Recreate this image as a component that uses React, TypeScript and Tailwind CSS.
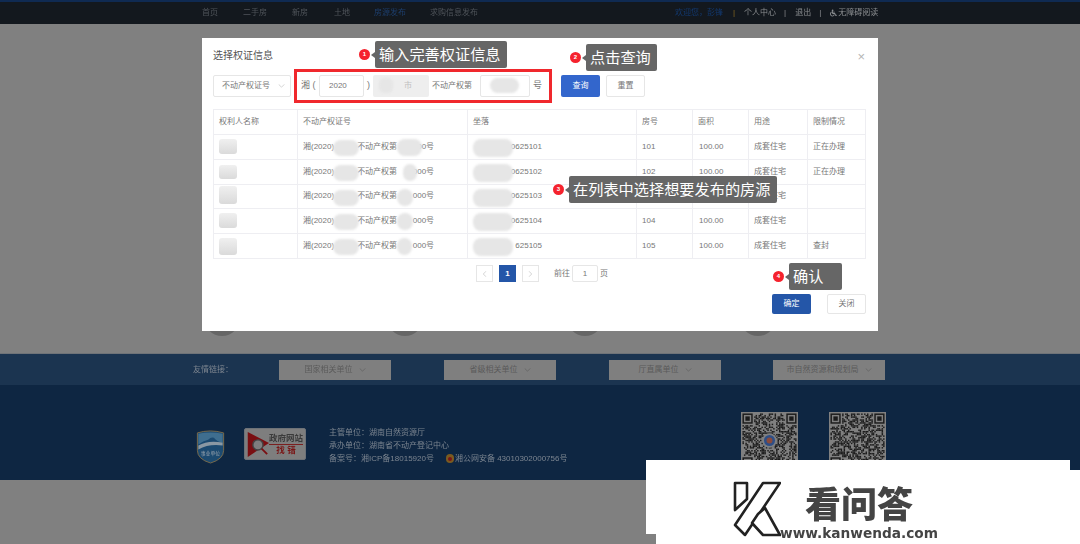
import { FaWheelchair } from "react-icons/fa";

const cjk = { fontFamily: '"Liberation Sans","Noto Sans CJK SC",sans-serif' };

const cols = ["w-[84px]", "w-[170px]", "w-[169px]", "w-[56px]", "w-[56px]", "w-[59px]", "w-[58px]"];
const head = ["权利人名称", "不动产权证号", "坐落", "房号", "面积", "用途", "限制情况"];
const rows = [
  { end: "00号", addr: "0625101", room: "101", limit: "正在办理", name: "top-[4px] h-[15px]", blob: "left-[99px] w-[25px]" },
  { end: "000号", addr: "0625102", room: "102", limit: "正在办理", name: "top-[5px] h-[14px]", blob: "left-[105px] w-[14px]" },
  { end: "000号", addr: "0625103", room: "103", limit: "", name: "top-[1px] h-[18px]", blob: "left-[99px] w-[16px]" },
  { end: "000号", addr: "0625104", room: "104", limit: "", name: "top-[4px] h-[15px]", blob: "left-[99px] w-[16px]" },
  { end: "000号", addr: "625105", room: "105", limit: "查封", name: "top-[4px] h-[17px]", blob: "left-[99px] w-[15px]" },
];

function Blob({ className }: { className: string }) {
  return <span className={"absolute rounded-[5px] bg-[#e6e6e6] blur-[1px] " + className} />;
}

function Callout({ n, text, className, width }: { n: number; text: string; className: string; width: string }) {
  return (
    <div className={"absolute flex items-center " + className}>
      <span className="flex h-[11px] w-[11px] items-center justify-center rounded-full bg-[#f5222d] text-[6px] font-bold text-white">{n}</span>
      <span className="ml-[1px] h-0 w-0 border-y-[3px] border-r-[4px] border-y-transparent border-r-[#666666]" />
      <span className={"flex h-[27px] items-center rounded-[2px] bg-[#666666] pl-[4px] text-[15.2px] leading-none text-white " + width}>{text}</span>
    </div>
  );
}

function Chevron({ className }: { className: string }) {
  return (
    <svg viewBox="0 0 8 5" className={"h-[4px] w-[7px] " + className} fill="none" stroke="currentColor" strokeWidth="0.8">
      <path d="M0.5 0.5 4 4 7.5 0.5" />
    </svg>
  );
}

function Qr({ seed, logo }: { seed: number; logo?: boolean }) {
  const n = 37;
  const cells: React.ReactNode[] = [];
  let s = seed;
  for (let y = 0; y < n; y++) {
    for (let x = 0; x < n; x++) {
      s = (s * 1103515245 + 12345) & 0x7fffffff;
      const inFinder = (x < 8 && y < 8) || (x > n - 9 && y < 8) || (x < 8 && y > n - 9);
      if (!inFinder && (s >> 16) % 2 === 0) cells.push(<rect key={x + "-" + y} x={x} y={y} width="1" height="1" />);
    }
  }
  const finder = (x: number, y: number) => (
    <g key={x + "," + y}>
      <rect x={x + 0.5} y={y + 0.5} width="6" height="6" fill="none" stroke="#1c1c1c" />
      <rect x={x + 2} y={y + 2} width="3" height="3" />
    </g>
  );
  return (
    <svg viewBox="-1 -1 39 39" className="h-[57px] w-[57px] bg-[#808080]" fill="#1c1c1c">
      {cells}
      {finder(0, 0)}
      {finder(n - 7, 0)}
      {finder(0, n - 7)}
      {logo && (
        <g>
          <circle cx="18.5" cy="18.5" r="5" fill="#808080" />
          <circle cx="18.5" cy="18.5" r="3.8" fill="#2f4f86" />
          <circle cx="18.5" cy="18.5" r="2" fill="#8a4a3c" />
        </g>
      )}
    </svg>
  );
}

function Watermark() {
  return (
    <>
      <div className="absolute left-[646px] top-[460px] h-[74px] w-[424px] bg-white" />
      <div className="absolute left-[656px] top-[470px] h-[74px] w-[424px] bg-white" />
      <svg viewBox="0 0 50 60" className="absolute left-[731px] top-[481px] h-[60px] w-[50px] blur-[0.5px]" fill="#fff" stroke="#222" strokeWidth="2.6" strokeLinejoin="round">
        <path d="M4 2H16V18L4 29z" />
        <path d="M32 2H49L14 54 4 44z" />
        <path d="M27 33 34 27 49 54H32L21 42z" />
      </svg>
      <div className="absolute left-[805px] top-[481px] text-[36px] font-black leading-[42px] text-[#444444] blur-[0.4px]" style={{ fontFamily: '"Noto Sans CJK SC",sans-serif' }}>
        看问答
      </div>
      <div className="absolute left-[780px] top-[524px] text-[13.7px] font-bold leading-[18px] text-[#444444] blur-[0.3px]" style={{ fontFamily: '"DejaVu Sans",sans-serif' }}>
        www.kanwenda.com
      </div>
    </>
  );
}

export default function App() {
  return (
    <div className="relative h-[544px] w-[1080px] overflow-hidden bg-[#808080]" style={cjk}>
      <div className="blur-[0.5px]">
        {/* top nav */}
        <nav className="flex h-[24px] items-center border-t-2 border-[#0f2a52] bg-[#13181e] pl-[202px] text-[8px] text-[#4f545a]">
          <span>首页</span>
          <span className="ml-[25px]">二手房</span>
          <span className="ml-[25px]">新房</span>
          <span className="ml-[26px]">土地</span>
          <span className="ml-[24px] text-[#1d3f6e]">房源发布</span>
          <span className="ml-[24px]">求购信息发布</span>
          <span className="ml-[197px] text-[#12386e]">欢迎您，彭锋</span>
          <span className="ml-[10px] text-[#8a6a20]">|</span>
          <span className="ml-[9px] text-[#8a8d90]">个人中心</span>
          <span className="ml-[8px] text-[#8a8d90]">|</span>
          <span className="ml-[9px] text-[#8a8d90]">退出</span>
          <span className="ml-[8px] text-[#8a8d90]">|</span>
          <FaWheelchair className="ml-[9px] h-[8px] w-[7px] text-[#8a8d90]" />
          <span className="ml-[1px] text-[#8a8d90]">无障碍阅读</span>
        </nav>

        {/* dimmed content behind the dialog */}
        <div className="flex h-[329px] items-end pb-[17px] pl-[204px]">
          <span className="h-[36px] w-[36px] rounded-full bg-[#666666]" />
          <span className="ml-[147px] h-[36px] w-[36px] rounded-full bg-[#666666]" />
          <span className="ml-[144px] h-[36px] w-[36px] rounded-full bg-[#666666]" />
          <span className="ml-[137px] h-[36px] w-[36px] rounded-full bg-[#666666]" />
        </div>

        {/* links */}
        <div className="flex h-[32px] items-center border-t border-[#6f7378] bg-[#1b3450] pl-[193px] text-[8px]">
          <span className="w-[86px] text-[#7d858f]">友情链接：</span>
          {["国家相关单位", "省级相关单位", "厅直属单位", "市自然资源和规划局"].map((t, i) => (
            <span key={t} className={"flex h-[20px] w-[112px] items-center justify-center gap-[6px] bg-[#7f7f7f] text-[#5a5a5a] " + (i === 0 ? "" : i === 3 ? "ml-[52px]" : "ml-[53px]")}>
              {t}
              <Chevron className="text-[#5f5f5f]" />
            </span>
          ))}
        </div>

        {/* footer */}
        <footer className="flex h-[95px] items-start bg-[#0e2642] pl-[196px] text-[8px] text-[#7c8590]">
          <svg viewBox="0 0 29 36" className="mt-[44px] h-[35px] w-[29px]">
            <path d="M1 4Q14 0 28 4v18q0 9-13.5 13Q1 31 1 22z" fill="#1c4a70" stroke="#7a6a4a" />
            <path d="M2 5Q14 2 27 5v9q-6-1-9-5-3-1-6 2-5 1-10 5z" fill="#3f6e8f" />
            <path d="M2 17q10-6 25-3v3q-14-2-25 4z" fill="#8a98a3" />
            <text x="14.5" y="27" fontSize="5" fill="#9aa4ae" textAnchor="middle">事业单位</text>
          </svg>
          <div className="ml-[19px] mt-[43px] flex h-[32px] w-[62px] items-center rounded-[2px] border border-[#6d7278] bg-[#7e7e7e]">
            <svg viewBox="0 0 26 30" className="h-[30px] w-[24px] shrink-0">
              <path d="M3 2 26 14 3 29z" fill="#7a0f12" />
              <circle cx="14" cy="16" r="5.5" fill="#7e7e7e" stroke="#444" strokeWidth="1.5" />
              <path d="M18 20l6 6" stroke="#7a0f12" strokeWidth="2" />
            </svg>
            <div className="flex flex-col items-center text-[8.5px] font-bold leading-[11px] text-[#3a3a3a]">
              <span className="whitespace-nowrap border-b border-[#7a2020]">政府网站</span>
              <span className="text-[#7a1515]">找 错</span>
            </div>
          </div>
          <div className="ml-[23px] mt-[41px] leading-[13px]">
            <div>主管单位：湖南自然资源厅</div>
            <div>承办单位：湖南省不动产登记中心</div>
            <div className="flex items-center">
              备案号：湘ICP备18015920号
              <span className="ml-[12px] mr-[1px] flex h-[9px] w-[8px] items-center justify-center rounded-full bg-[#7a5a20]">
                <span className="h-[4px] w-[4px] rounded-full bg-[#7a1515]" />
              </span>
              湘公网安备 43010302000756号
            </div>
          </div>
          <div className="absolute left-[741px] top-[412px] flex gap-[31px]">
            <Qr seed={7} logo />
            <Qr seed={23} />
          </div>
        </footer>

        {/* dialog */}
        <div className="absolute left-[202px] top-[38px] h-[293px] w-[676px] bg-white pl-[11px] pr-[12px] pt-[13px] text-[8px] text-[#777777]">
          <div className="flex h-[10px] items-center justify-between">
            <h2 className="text-[10px] font-normal leading-[10px] text-[#555555]">选择权证信息</h2>
            <span className="mr-[1px] text-[13px] leading-none text-[#b5b5b5]">×</span>
          </div>

          <div className="mt-[14px] flex h-[22px] items-center">
            <div className="flex h-[22px] w-[78px] items-center justify-between rounded-[2px] border border-[#e6e6e6] pl-[8px] pr-[5px]">
              不动产权证号
              <Chevron className="text-[#bdbdbd]" />
            </div>
            <span className="ml-[10px] w-[18px] text-[9px]">湘 (</span>
            <span className="flex h-[22px] w-[45px] items-center rounded-[2px] border border-[#e6e6e6] pl-[9px]">2020</span>
            <span className="ml-[3px] w-[6px] text-[9px]">)</span>
            <span className="relative flex h-[22px] w-[56px] items-center justify-center rounded-[2px] bg-[#eeeeee] pl-[14px] text-[#c0c0c0]">
              市
              <Blob className="left-[6px] top-[3px] h-[15px] w-[14px] bg-[#e2e2e2]" />
            </span>
            <span className="ml-[3px] w-[48px]">不动产权第</span>
            <span className="relative h-[22px] w-[50px] rounded-[2px] border border-[#e6e6e6]">
              <Blob className="left-[9px] top-[2px] h-[15px] w-[29px] rounded-[8px]" />
            </span>
            <span className="ml-[3px] w-[28px] text-[9px]">号</span>
            <button className="flex h-[22px] w-[39px] items-center justify-center rounded-[2px] bg-[#3366cc] text-white">查询</button>
            <button className="ml-[6px] flex h-[22px] w-[39px] items-center justify-center rounded-[2px] border border-[#e6e6e6]">重置</button>
          </div>

          <table className="mt-[12px] w-[652px] table-fixed border-collapse border border-[#eeeef2] leading-none">
            <colgroup>
              {cols.map((c, i) => (
                <col key={i} className={c} />
              ))}
            </colgroup>
            <thead>
              <tr className="h-[25px]">
                {head.map((h) => (
                  <th key={h} className="border border-[#eeeef2] pl-[5px] text-left font-normal">{h}</th>
                ))}
              </tr>
            </thead>
            <tbody>
              {rows.map((r) => (
                <tr key={r.room} className="h-[24.8px]">
                  <td className="relative border border-[#eeeef2]">
                    <span className={"absolute left-[5px] w-[18px] rounded-[3px] bg-gradient-to-b from-[#f0f0f0] to-[#dadada] blur-[0.5px] " + r.name} />
                  </td>
                  <td className="relative border border-[#eeeef2] pl-[5px]">
                    <span>湘(2020)</span>
                    <span className="ml-[23px]">不动产权第</span>
                    <span className="ml-[15px] inline-block w-[22px] text-right">{r.end}</span>
                    <Blob className="left-[35px] top-[5px] h-[16px] w-[26px] rounded-[8px]" />
                    <Blob className={"top-[4px] h-[17px] rounded-[8px] " + r.blob} />
                  </td>
                  <td className="relative border border-[#eeeef2] pr-[94px] text-right">
                    {r.addr}
                    <Blob className="left-[5px] top-[4px] h-[18px] w-[40px] rounded-[8px]" />
                  </td>
                  <td className="border border-[#eeeef2] pl-[5px]">{r.room}</td>
                  <td className="border border-[#eeeef2] pl-[6px]">100.00</td>
                  <td className="border border-[#eeeef2] pl-[5px]">成套住宅</td>
                  <td className="border border-[#eeeef2] pl-[5px]">{r.limit}</td>
                </tr>
              ))}
            </tbody>
          </table>

          <div className="mt-[6px] flex h-[18px] items-center pl-[263px]">
            <span className="flex h-[17px] w-[17px] items-center justify-center border border-[#e6e6e6] text-[#bbbbbb]"><Chevron className="rotate-90" /></span>
            <span className="ml-[6px] flex h-[17px] w-[17px] items-center justify-center bg-[#2456a8] font-bold text-white">1</span>
            <span className="ml-[6px] flex h-[17px] w-[17px] items-center justify-center border border-[#e6e6e6] text-[#bbbbbb]"><Chevron className="-rotate-90" /></span>
            <span className="ml-[15px]">前往</span>
            <span className="ml-[2px] flex h-[17px] w-[26px] items-center justify-center rounded-[2px] border border-[#e6e6e6]">1</span>
            <span className="ml-[2px]">页</span>
          </div>

          <div className="mt-[11px] flex justify-end gap-[16px]">
            <button className="flex h-[20px] w-[39px] items-center justify-center rounded-[2px] bg-[#2456a8] text-white">确定</button>
            <button className="flex h-[20px] w-[39px] items-center justify-center rounded-[2px] border border-[#e6e6e6]">关闭</button>
          </div>
        </div>

        {/* annotations */}
        <div className="absolute left-[294px] top-[69px] h-[34px] w-[258px] border-[3px] border-[#f0282d]" />
        <Callout n={1} text="输入完善权证信息" width="w-[132px]" className="left-[359px] top-[41px]" />
        <Callout n={2} text="点击查询" width="w-[71px]" className="left-[570px] top-[44px]" />
        <Callout n={3} text="在列表中选择想要发布的房源" width="w-[208px]" className="left-[553px] top-[176px]" />
        <Callout n={4} text="确认" width="w-[53px]" className="left-[773px] top-[263px]" />
      </div>

      <Watermark />
    </div>
  );
}
